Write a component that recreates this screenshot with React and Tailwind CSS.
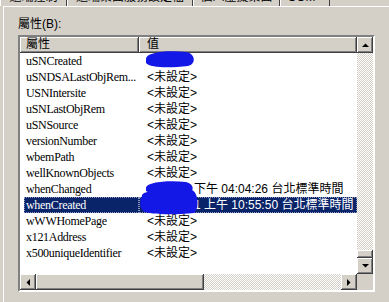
import React from "react";

const raised =
  "shadow-[inset_-1px_-1px_#404040,inset_1px_1px_#ffffff,inset_-2px_-2px_#808080,inset_2px_2px_#d4d0c8]";
const headerRaised =
  "shadow-[inset_-1px_-1px_#404040,inset_1px_1px_#ffffff,inset_-2px_-2px_#808080]";
const dither =
  "bg-[repeating-conic-gradient(#d4d0c8_0%_25%,#ffffff_0%_50%)] bg-size-[2px_2px]";

const sans = "font-['Liberation_Sans','Noto_Sans_CJK_TC',sans-serif]";
const serif = "font-['Liberation_Serif','Noto_Sans_CJK_TC',serif]";

const rows = [
  ["uSNCreated", ""],
  ["uSNDSALastObjRem...", "<未設定>"],
  ["USNIntersite", "<未設定>"],
  ["uSNLastObjRem", "<未設定>"],
  ["uSNSource", "<未設定>"],
  ["versionNumber", "<未設定>"],
  ["wbemPath", "<未設定>"],
  ["wellKnownObjects", "<未設定>"],
  ["whenChanged", "下午 04:04:26 台北標準時間", "late"],
  ["whenCreated", "1 上午 10:55:50 台北標準時間", "sel"],
  ["wWWHomePage", "<未設定>"],
  ["x121Address", "<未設定>"],
  ["x500uniqueIdentifier", "<未設定>"],
];

function Tri({ dir }) {
  const pts = {
    up: "0,4 7,4 3.5,0.5",
    down: "0,0 7,0 3.5,3.5",
    left: "4,0 4,7 0.5,3.5",
    right: "0,0 0,7 3.5,3.5",
  }[dir];
  const w = dir === "up" || dir === "down" ? 7 : 4;
  const h = dir === "up" || dir === "down" ? 4 : 7;
  return (
    <svg width={w} height={h} viewBox={`0 0 ${w} ${h}`}>
      <polygon points={pts} fill="#000" />
    </svg>
  );
}

function Btn({ dir }) {
  return (
    <div
      className={`w-[16px] h-[16px] shrink-0 bg-[#d4d0c8] flex items-center justify-center ${raised}`}
    >
      <Tri dir={dir} />
    </div>
  );
}

export default function App() {
  const tabs = [
    ["遠端控制", "w-[67px]"],
    ["遠端桌面服務設定檔", "w-[126px]"],
    ["個人虛擬桌面", "w-[87px]"],
    ["COM+", "w-[50px]"],
  ];
  return (
    <div className={`relative w-[389px] h-[302px] bg-[#d4d0c8] overflow-hidden ${sans} text-[12px] text-black`}>
      {/* tab strip */}
      <div className="flex h-[6px] overflow-hidden">
        {tabs.map(([t, w], i) => (
          <div
            key={i}
            className={`${w} shrink-0 h-[6px] border-l border-l-white border-r border-r-[#404040] overflow-hidden flex justify-center`}
          >
            <div className="-mt-[10px] leading-[14px] whitespace-nowrap">{t}</div>
          </div>
        ))}
      </div>
      {/* panel */}
      <div className="ml-[3px] w-[386px] h-[296px] border-l border-t border-white pl-[14px] pt-[10px]">
        <div className="leading-[14px] h-[18px]">屬性(B):</div>
        {/* list view */}
        <div className="w-[357px] h-[257px] overflow-hidden border-2 border-t-[#808080] border-l-[#808080] border-b-white border-r-white bg-white flex flex-col">
          <div className="flex h-[237px] shrink-0">
            {/* main */}
            <div className="w-[337px] shrink-0 flex flex-col overflow-hidden">
              <div className="flex h-[16px] shrink-0 bg-[#d4d0c8]">
                <div className={`w-[119px] shrink-0 pl-[6px] leading-[15px] ${headerRaised}`}>屬性</div>
                <div className={`w-[218px] shrink-0 pl-[8px] leading-[15px] ${headerRaised}`}>值</div>
              </div>
              {rows.map(([a, b, k], i) => (
                <div key={i} className="flex h-[16px] shrink-0">
                  <div
                    className={`w-[119px] shrink-0 h-[16px] pl-[4px] ${serif} text-[12px] tracking-[-0.3px] whitespace-nowrap overflow-hidden`}
                  >
                    <div
                      className={
                        k === "sel"
                          ? "bg-[#0a246a] text-white h-[16px] leading-[16px] pl-[2px] outline outline-1 outline-dotted outline-[#8a96c0] -outline-offset-1"
                          : "pl-[2px] leading-[16px]"
                      }
                    >
                      {a}
                    </div>
                  </div>
                  <div
                    className={`w-[218px] shrink-0 overflow-hidden h-[16px] leading-[16px] whitespace-nowrap ${
                      k === "sel" ? "bg-[#0a246a] text-white outline outline-1 outline-dotted outline-[#8a96c0] -outline-offset-1" : ""
                    } ${k ? "pl-[55px]" : "pl-[8px]"}`}
                  >
                    {b}
                  </div>
                </div>
              ))}
            </div>
            {/* vertical scrollbar */}
            <div className="w-[16px] shrink-0 flex flex-col">
              <Btn dir="up" />
              <div className={`flex-1 ${dither} flex flex-col justify-end`}>
                <div className={`h-[8px] bg-[#d4d0c8] ${raised}`} />
              </div>
              <Btn dir="down" />
            </div>
          </div>
          {/* horizontal scrollbar row */}
          <div className="flex h-[16px] shrink-0">
            <Btn dir="left" />
            <div className={`w-[168px] shrink-0 h-[16px] bg-[#d4d0c8] ${raised}`} />
            <div className={`flex-1 ${dither}`} />
            <Btn dir="right" />
            <div className="w-[16px] h-[16px] shrink-0 bg-[#d4d0c8]" />
          </div>
        </div>
      </div>
      {/* blue marker scribbles */}
      <svg className="absolute left-0 top-0 pointer-events-none" width="389" height="302">
        <path d="M146,59 C146,52 168,50 186,52 C196,54 196,64 188,66 C170,68 150,68 146,63 Z" fill="#1418e6" />
        <path d="M146,188 C146,182 168,180 186,182 C194,184 195,191 188,193 C170,194 150,194 146,191 Z" fill="#1418e6" />
        <path d="M142,196 C141,190 170,188 192,190 C199,193 199,210 194,213 C175,215 150,215 143,211 C139,206 140,200 142,196 Z" fill="#1418e6" />
      </svg>
    </div>
  );
}
